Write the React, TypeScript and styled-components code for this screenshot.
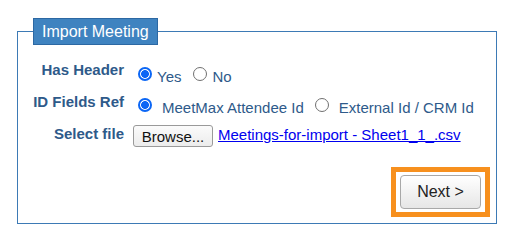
import React from "react";
import styled, { createGlobalStyle } from "styled-components";

const Global = createGlobalStyle`
  html, body { margin: 0; padding: 0; background: #ffffff; }
  body { font-family: "Liberation Sans", Arial, sans-serif; }
`;

const Page = styled.div`
  padding: 18px 0 0 17px;
`;

const Fieldset = styled.fieldset`
  box-sizing: border-box;
  width: 480px;
  height: 206px;
  margin: 0;
  padding: 0 6px 6px 0;
  border: 1px solid #3d7ab5;
  display: flex;
  flex-direction: column;
`;

const Legend = styled.legend`
  margin-left: 15px;
  padding: 4px 8px 4px 8px;
  background: #3f83c0;
  border: 1px solid #2c68a3;
  color: #ffffff;
  font-size: 16px;
  line-height: 17px;
`;

const Form = styled.div`
  display: flex;
  flex-direction: column;
  margin-top: 16px;
`;

const Row = styled.div<{ $h: number }>`
  display: grid;
  grid-template-columns: 106px 1fr;
  column-gap: 9px;
  height: ${(p) => p.$h}px;
  align-items: start;
`;

const Label = styled.div`
  text-align: right;
  font-weight: bold;
  font-size: 15px;
  line-height: 17px;
  color: #2e5a8a;
`;

const Values = styled.div`
  display: flex;
  align-items: flex-start;
`;

const Option = styled.label<{ $gap: number; $after: number }>`
  display: flex;
  align-items: flex-start;
  gap: ${(p) => p.$gap}px;
  margin-right: ${(p) => p.$after}px;
  font-size: 15px;
  line-height: 17px;
  color: #2e5a8a;
`;

const Radio = styled.span<{ $checked?: boolean; $top: number; $ml: number }>`
  box-sizing: border-box;
  width: 14px;
  height: 14px;
  margin-left: ${(p) => p.$ml}px;
  margin-top: ${(p) => p.$top}px;
  border-radius: 50%;
  flex: none;
  border: ${(p) => (p.$checked ? "2px solid #0b66f5" : "1px solid #707070")};
  background: ${(p) =>
    p.$checked
      ? "radial-gradient(circle, #0b66f5 0 3.6px, #ffffff 4.2px)"
      : "#ffffff"};
`;

const OptText = styled.span<{ $top: number }>`
  margin-top: ${(p) => p.$top}px;
  white-space: nowrap;
`;

const BrowseButton = styled.button`
  box-sizing: border-box;
  height: 22px;
  width: 80px;
  padding: 0;
  font-family: "Liberation Sans", Arial, sans-serif;
  font-size: 15px;
  color: #111;
  background: linear-gradient(#fbfbfb, #ececec);
  border: 1px solid #9a9a9a;
  border-radius: 3px;
`;

const FileLink = styled.a`
  margin: 1px 0 0 5px;
  font-size: 15px;
  line-height: 17px;
  color: #0000ee;
  text-decoration: underline;
  white-space: nowrap;
`;

const Footer = styled.div`
  margin-top: auto;
  display: flex;
  justify-content: flex-end;
`;

const Highlight = styled.div`
  border: 5px solid #f7901e;
  padding: 3px 4px;
  background: #ffffff;
`;

const NextButton = styled.button`
  box-sizing: border-box;
  width: 81px;
  height: 34px;
  padding: 0;
  font-family: "Liberation Sans", Arial, sans-serif;
  font-size: 16px;
  color: #222;
  background: linear-gradient(#ffffff, #e6e6e6);
  border: 1px solid #a8a8a8;
  border-radius: 4px;
`;

export default function App() {
  return (
    <>
      <Global />
      <Page>
        <Fieldset>
          <Legend>Import Meeting</Legend>
          <Form>
            <Row $h={32}>
              <Label>Has Header</Label>
              <Values>
                <Option $gap={5} $after={12}>
                  <Radio $checked $top={6} $ml={5} />
                  <OptText $top={7}>Yes</OptText>
                </Option>
                <Option $gap={5} $after={0}>
                  <Radio $top={6} $ml={0} />
                  <OptText $top={7}>No</OptText>
                </Option>
              </Values>
            </Row>
            <Row $h={32}>
              <Label>ID Fields Ref</Label>
              <Values>
                <Option $gap={10} $after={11}>
                  <Radio $checked $top={5} $ml={5} />
                  <OptText $top={6}>MeetMax Attendee Id</OptText>
                </Option>
                <Option $gap={10} $after={0}>
                  <Radio $top={5} $ml={0} />
                  <OptText $top={6}>External Id / CRM Id</OptText>
                </Option>
              </Values>
            </Row>
            <Row $h={22}>
              <Label>Select file</Label>
              <Values>
                <BrowseButton type="button">Browse...</BrowseButton>
                <FileLink href="#">Meetings-for-import - Sheet1_1_.csv</FileLink>
              </Values>
            </Row>
          </Form>
          <Footer>
            <Highlight>
              <NextButton type="button">Next &gt;</NextButton>
            </Highlight>
          </Footer>
        </Fieldset>
      </Page>
    </>
  );
}
